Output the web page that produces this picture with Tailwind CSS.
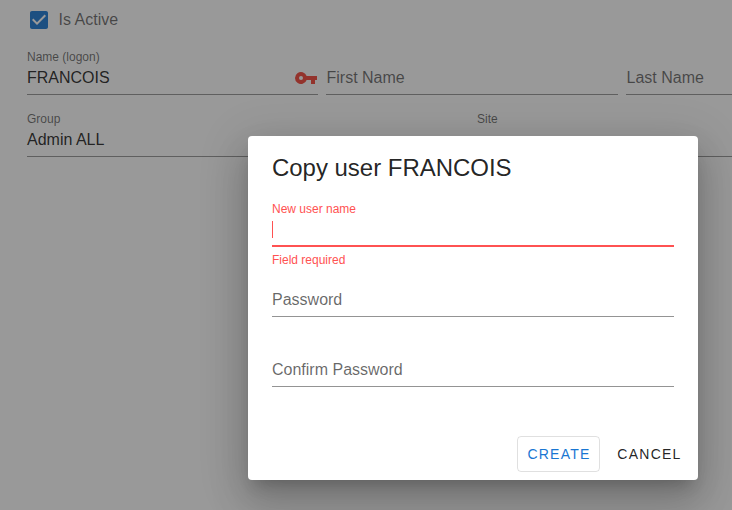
<!DOCTYPE html>
<html lang="en">
<head>
<meta charset="utf-8">
<title>Users</title>
<script src="https://cdn.jsdelivr.net/npm/@tailwindcss/browser@4"></script>
</head>
<body class="relative h-[510px] w-[732px] overflow-hidden bg-white font-['Liberation_Sans',Arial,sans-serif] text-base text-black/87">
  <main class="w-full pl-[27px] pt-2">
    <label class="flex h-6 items-center gap-2 text-black/60">
      <svg class="-ml-[0.5px] size-6 text-[#1976d2]" viewBox="0 0 24 24" fill="currentColor"><path d="M10,17L5,12L6.41,10.58L10,14.17L17.59,6.58L19,8M19,3H5C3.89,3 3,3.89 3,5V19C3,20.1 3.9,21 5,21H19C20.1,21 21,20.1 21,19V5C21,3.89 20.1,3 19,3Z"/></svg>
      <span>Is Active</span>
    </label>
    <div class="mt-[18px] flex gap-2">
      <div class="h-[45px] w-[291px] border-b border-black/42">
        <div class="h-[14px] text-xs leading-[14px] text-black/60">Name (logon)</div>
        <div class="flex h-7 items-center justify-between">
          <span>FRANCOIS</span>
          <svg class="size-6 text-[#f44336]" viewBox="0 0 24 24" fill="currentColor"><path d="M7 14A2 2 0 1 1 9 12A2 2 0 0 1 7 14M12.65 10A6 6 0 1 0 12.65 14H17V18H21V14H23V10Z"/></svg>
        </div>
      </div>
      <div class="h-[45px] w-[292px] border-b border-black/42 pt-[14px] pl-[0.5px] leading-7 text-black/60">First Name</div>
      <div class="h-[45px] flex-1 border-b border-black/42 pt-[14px] pl-[0.5px] leading-7 text-black/60">Last Name</div>
    </div>
    <div class="mt-[17px] flex gap-2">
      <div class="h-[45px] w-[442px] border-b border-black/42">
        <div class="h-[14px] text-xs leading-[14px] text-black/60">Group</div>
        <div class="leading-7">Admin ALL</div>
      </div>
      <div class="h-[45px] flex-1 border-b border-black/42">
        <div class="h-[14px] text-xs leading-[14px] text-black/60">Site</div>
      </div>
    </div>
  </main>

  <div class="absolute inset-0 bg-[#212121]/46"></div>

  <section role="dialog" class="absolute left-[248px] top-[136px] flex h-[344px] w-[450px] flex-col rounded bg-white px-6 pt-4 shadow-[0_11px_15px_-7px_rgba(0,0,0,0.2),0_24px_38px_3px_rgba(0,0,0,0.14),0_9px_46px_8px_rgba(0,0,0,0.12)]">
    <h2 class="h-8 text-2xl leading-8 tracking-[-0.03px]">Copy user FRANCOIS</h2>
    <div class="mt-[18px] h-[45px] border-b-2 border-[#ff5252]">
      <div class="h-[14px] text-xs leading-[14px] text-[#ff5252]">New user name</div>
      <div class="mt-[5px] h-[17px] w-px bg-[#ff5252]"></div>
    </div>
    <div class="mt-[6px] h-[14px] text-xs leading-[14px] text-[#ff5252]">Field required</div>
    <div class="mt-[18px] h-[32px] border-b border-black/42 leading-[30px] text-black/60">Password</div>
    <div class="mt-[38px] h-[32px] border-b border-black/42 leading-[30px] text-black/60">Confirm Password</div>
    <div class="-mr-4 mt-[49px] flex h-9 justify-end gap-[7px] text-sm tracking-[1.25px]">
      <button class="w-[83px] rounded border border-black/12 pl-[1px] text-[#1976d2]">CREATE</button>
      <button class="-mr-px w-[84px] pl-[1px]">CANCEL</button>
    </div>
  </section>
</body>
</html>
